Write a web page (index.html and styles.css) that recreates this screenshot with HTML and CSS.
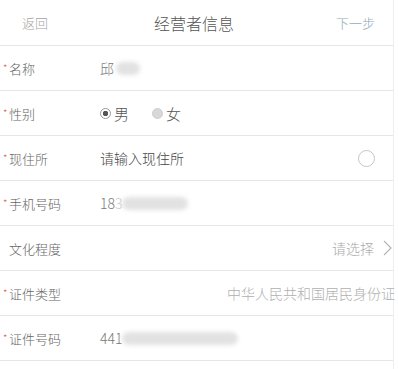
FILE: index.html
```html
<!DOCTYPE html>
<html lang="zh-CN">

<head>
    <meta charset="UTF-8">
    <meta name="viewport" content="width=device-width, initial-scale=1.0">
    <title>经营者信息</title>
    <link rel="stylesheet" href="styles.css">
</head>

<body>
    <div class="page">
        <header class="topbar">
            <span class="back">返回</span>
            <h1>经营者信息</h1>
            <span class="next">下一步</span>
        </header>

        <div class="form">
            <div class="row">
                <label class="req">名称</label>
                <div class="value">邱<span class="blur blur-name"></span></div>
            </div>
            <div class="row">
                <label class="req">性别</label>
                <div class="value radios">
                    <span class="radio checked"></span><span class="radio-text">男</span>
                    <span class="radio off"></span><span class="radio-text">女</span>
                </div>
            </div>
            <div class="row">
                <label class="req">现住所</label>
                <div class="value dark">请输入现住所</div>
                <span class="circle"></span>
            </div>
            <div class="row">
                <label class="req">手机号码</label>
                <div class="value">18<span class="cut">3</span><span class="blur blur-phone"></span></div>
            </div>
            <div class="row">
                <label>文化程度</label>
                <div class="pick">请选择
                    <svg width="9" height="16" viewBox="0 0 9 16"><path d="M1 1 L8 8 L1 15" fill="none" stroke="#b5b5b5" stroke-width="1.2"/></svg>
                </div>
            </div>
            <div class="row">
                <label class="req">证件类型</label>
                <div class="pick idtype">中华人民共和国居民身份证</div>
            </div>
            <div class="row">
                <label class="req">证件号码</label>
                <div class="value">441<span class="blur blur-id"></span></div>
            </div>
        </div>
    </div>
</body>

</html>
```

FILE: styles.css
```css
body {
    margin: 0;
    padding: 0;
    background: #fff;
    font-family: "Noto Sans CJK SC", "Noto Sans", sans-serif;
    font-weight: 300;
    color: #666;
    overflow: hidden;
}

.page {
    width: 393px;
    height: 369px;
    border-right: 1px solid #eeeeee;
    background: #fff;
}

.topbar {
    height: 45px;
    display: flex;
    align-items: center;
    justify-content: space-between;
    padding: 0 18px 0 22px;
    border-bottom: 1px solid #e6e6e6;
}

.topbar h1 {
    margin: 0 0 0 4px;
    font-size: 16px;
    font-weight: 300;
    color: #555;
}

.back {
    font-size: 13px;
    color: #a5a5a5;
}

.next {
    font-size: 13px;
    color: #8fa9b3;
}

.row {
    height: 44px;
    border-bottom: 1px solid #e6e6e6;
    display: flex;
    align-items: center;
}

.row label {
    width: 100px;
    padding-left: 9px;
    box-sizing: border-box;
    font-size: 13px;
    color: #666;
    position: relative;
}

.row label.req::before {
    content: "*";
    color: #d9534f;
    font-size: 10px;
    position: absolute;
    left: 3px;
    top: 1px;
}

.value {
    display: flex;
    align-items: center;
    font-size: 14px;
    color: #777;
}

.value.dark {
    flex: 1;
    color: #444;
}

.blur {
    display: inline-block;
    height: 13px;
    background: #e2e2e2;
    border-radius: 7px;
    filter: blur(2px);
}

.blur-name {
    width: 24px;
    margin-left: 2px;
}

.cut {
    color: #c8c8c8;
}

.blur-phone {
    width: 66px;
}

.blur-id {
    width: 116px;
}

.radios {
    gap: 3px;
}

.radio {
    width: 11px;
    height: 11px;
    border-radius: 50%;
    box-sizing: border-box;
    display: inline-block;
}

.radio.checked {
    border: 1px solid #999;
    background: radial-gradient(circle, #555 0 2.5px, #fff 3px);
}

.radio.off {
    margin-left: 20px;
    background: #d8d8d8;
    border: 1px solid #cfcfcf;
}

.radio-text {
    font-size: 15px;
    color: #555;
}

.circle {
    width: 17px;
    height: 17px;
    border: 1px solid #c6c6c6;
    border-radius: 50%;
    box-sizing: border-box;
    margin-right: 18px;
}

.pick {
    margin-left: auto;
    display: flex;
    align-items: center;
    gap: 9px;
    font-size: 14px;
    color: #aaa;
    padding-right: 1px;
}

.pick.idtype {
    font-size: 14px;
    padding-right: 0;
    margin-right: -2px;
    color: #b0b0b0;
    white-space: nowrap;
}
```
